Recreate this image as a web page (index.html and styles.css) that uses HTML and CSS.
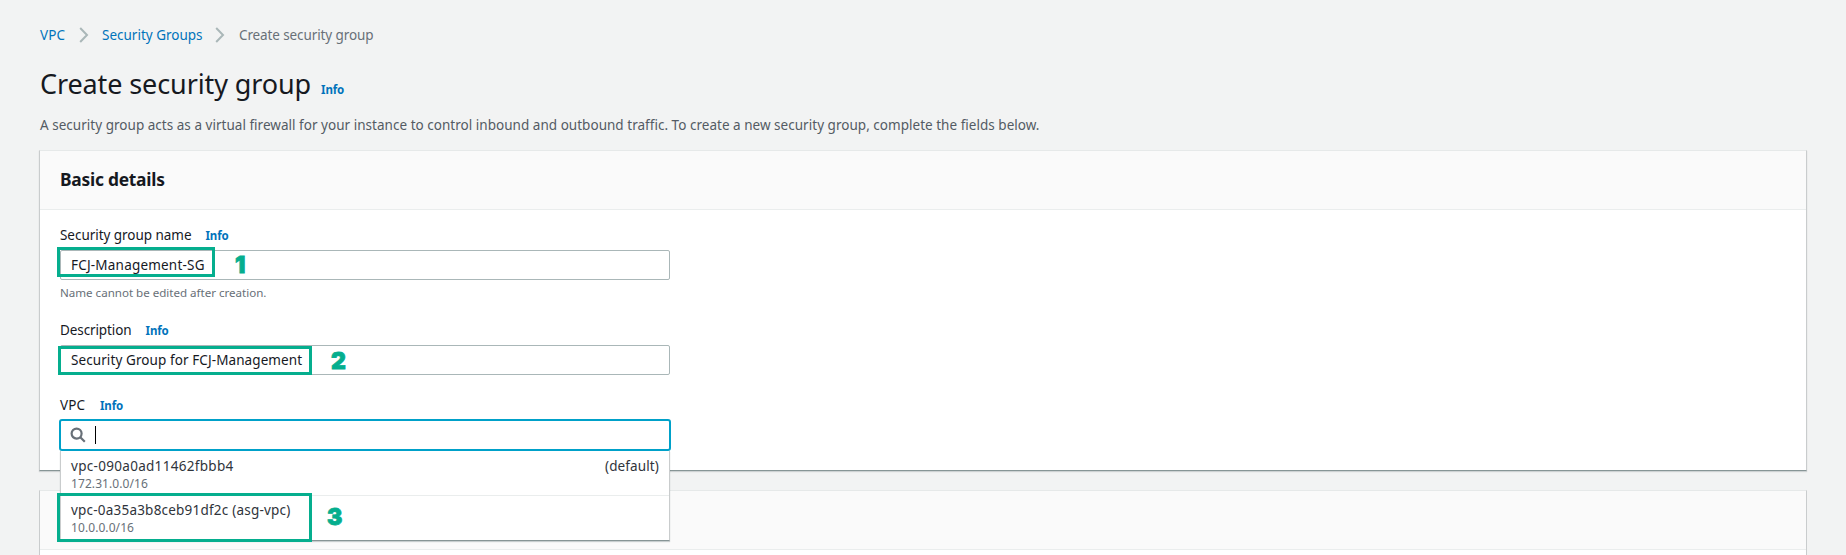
FILE: index.html
```
<!DOCTYPE html>
<html lang="en">
<head>
<meta charset="utf-8">
<title>Create security group</title>
<link rel="stylesheet" href="styles.css">
</head>
<body>
<main class="page">
  <nav class="breadcrumb">
    <a class="crumb crumb-vpc" href="#">VPC</a>
    <svg class="chevron" width="10" height="16" viewBox="0 0 10 16"><path d="M1.2 1 L8 8 L1.2 15"/></svg>
    <a class="crumb crumb-groups" href="#">Security Groups</a>
    <svg class="chevron" width="10" height="16" viewBox="0 0 10 16"><path d="M1.2 1 L8 8 L1.2 15"/></svg>
    <span class="crumb current">Create security group</span>
  </nav>
  <header class="heading">
    <h1 class="title">Create security group</h1>
    <a class="info" href="#">Info</a>
  </header>
  <p class="intro">A security group acts as a virtual firewall for your instance to control inbound and outbound traffic. To create a new security group, complete the fields below.</p>

  <section class="card">
    <div class="card-header"><h2 class="card-title">Basic details</h2></div>
    <div class="card-body">
      <div class="field field-name">
        <div class="label-row"><span class="label">Security group name</span><a class="info" href="#">Info</a></div>
        <div class="input"><span class="value value-name">FCJ-Management-SG</span></div>
        <div class="mark mark-one"></div>
        <div class="num num-one">1</div>
        <div class="hint">Name cannot be edited after creation.</div>
      </div>
      <div class="field">
        <div class="label-row"><span class="label label-desc">Description</span><a class="info" href="#">Info</a></div>
        <div class="input"><span class="value value-desc">Security Group for FCJ-Management</span></div>
        <div class="mark mark-two"></div>
        <div class="num num-two">2</div>
      </div>
      <div class="field field-vpc">
        <div class="label-row"><span class="label label-vpc">VPC</span><a class="info" href="#">Info</a></div>
        <div class="search">
          <svg class="search-icon" width="16" height="16" viewBox="0 0 16 16"><circle cx="6.6" cy="6.6" r="5"/><path d="M10.3 10.3 L14.8 14.8"/></svg>
          <span class="caret"></span>
        </div>
        <div class="dropdown">
          <div class="option">
            <div class="option-row"><span class="option-name">vpc-090a0ad11462fbbb4</span><span class="tag">(default)</span></div>
            <div class="cidr">172.31.0.0/16</div>
          </div>
          <div class="option">
            <div class="option-row"><span class="option-name name-asg">vpc-0a35a3b8ceb91df2c (asg-vpc)</span></div>
            <div class="cidr">10.0.0.0/16</div>
          </div>
        </div>
        <div class="mark mark-three"></div>
        <div class="num num-three">3</div>
      </div>
    </div>
  </section>

  <section class="card card-next">
    <div class="card-header"></div>
    <div class="next-body"></div>
  </section>
</main>
</body>
</html>
```
FILE: styles.css
```
* { box-sizing: border-box; }

body {
  margin: 0;
  height: 555px;
  overflow: hidden;
  background: #f2f3f3;
  color: #16191f;
  font: 13.5px/22px "Noto Sans", sans-serif;
}

a { color: #0073bb; text-decoration: none; }

.page { height: 555px; padding: 24px 39px 0; }

.breadcrumb { display: flex; align-items: center; height: 22px; padding-left: 1px; white-space: nowrap; }
.crumb-vpc { width: 26px; letter-spacing: 0.1px; }
.crumb-groups { width: 100px; }
.chevron { flex: none; margin: 0 13px 0 13px; fill: none; stroke: #aab7b8; stroke-width: 2; }
.current { margin-left: 1px; color: #687078; letter-spacing: -0.11px; }

.heading { display: flex; align-items: baseline; gap: 10px; height: 36px; margin-top: 20px; padding-left: 1px; }
.title { margin: 0; font-size: 27px; line-height: 36px; font-weight: 400; letter-spacing: -0.11px; }
.info { font-size: 11.5px; font-weight: 700; letter-spacing: -0.12px; }

.intro { margin: 12px 0 14px; padding-left: 1px; height: 22px; color: #545b64; letter-spacing: 0.026px; white-space: nowrap; }

.card {
  margin-top: 19px;
  background: #fff;
  border: 1px solid #c9cccd;
  border-top-color: #e6e9e9;
  border-bottom-color: #879596;
  box-shadow: 0 1px 1px rgba(0, 28, 36, 0.15);
}
.intro + .card { margin-top: 0; }
.card-header { display: flex; align-items: center; height: 59px; padding: 0 20px 2px; background: #fafafa; border-bottom: 1px solid #eaeded; }
.card-title { margin: 0; font-size: 17.4px; font-weight: 700; letter-spacing: -0.25px; }
.card-body { padding: 14px 20px 19px; }
.card-next { border-bottom: 0; box-shadow: none; }
.next-body { height: 5px; }

.field { position: relative; width: 610px; margin-bottom: 19px; }
.field-name { margin-bottom: 17px; }
.field-vpc { margin-bottom: 0; }
.label-row { display: flex; align-items: baseline; gap: 14px; height: 22px; margin-bottom: 4px; }
.field-vpc .label-row { margin-bottom: 3px; }
.label { letter-spacing: -0.04px; }
.label-desc { letter-spacing: -0.1px; }
.label-vpc { width: 26px; letter-spacing: 0.1px; }

.input { display: flex; align-items: center; height: 30px; padding-left: 10px; border: 1px solid #aab7b8; border-radius: 2px; background: #fff; }
.value-name { letter-spacing: 0.2px; }
.value-desc { letter-spacing: 0.09px; }
.hint { height: 18px; margin-top: 4px; font-size: 11.6px; line-height: 18px; color: #687078; letter-spacing: -0.02px; }

.search { display: flex; align-items: center; height: 32px; margin: 0 -1px; padding-left: 9px; border: 2px solid #00a1c9; border-radius: 3px; background: #fff; }
.search-icon { fill: none; stroke: #687078; stroke-width: 2.2; }
.caret { width: 1px; height: 18px; margin-left: 9px; background: #000; }

.dropdown {
  position: absolute;
  top: 100%;
  left: 0;
  z-index: 1;
  width: 610px;
  background: #fff;
  border: 1px solid #c9cccd;
  border-top: 0;
  border-bottom-color: #879596;
  box-shadow: 0 1px 1px rgba(0, 28, 36, 0.2);
  color: #2f343b;
}
.option { height: 45px; padding: 5px 10px 3px; border-bottom: 1px solid #eaeded; }
.option:last-child { height: 44px; padding-top: 4px; border-bottom: 0; }
.option-row { display: flex; justify-content: space-between; height: 20px; line-height: 20px; }
.option-name { letter-spacing: 0.3px; }
.name-asg { letter-spacing: 0.21px; }
.tag { letter-spacing: 0.12px; }
.cidr { height: 16px; font-size: 12px; line-height: 16px; letter-spacing: 0.08px; color: #687078; }

/* Step highlights drawn over the form */
.mark { position: absolute; z-index: 2; border: 3px solid #05ae8e; }
.mark-one { left: -3px; top: 23px; width: 158px; height: 30px; }
.mark-two { left: -2px; top: 27px; width: 254px; height: 29px; }
.mark-three { left: -3px; top: 99px; width: 255px; height: 49px; }
.num { position: absolute; z-index: 2; color: #05ae8e; font: 900 23px/28px Inter, sans-serif; -webkit-text-stroke: 0.8px #05ae8e; }
.num-one { left: 175px; top: 27px; }
.num-two { left: 271px; top: 28px; }
.num-three { left: 267px; top: 109px; }
```
